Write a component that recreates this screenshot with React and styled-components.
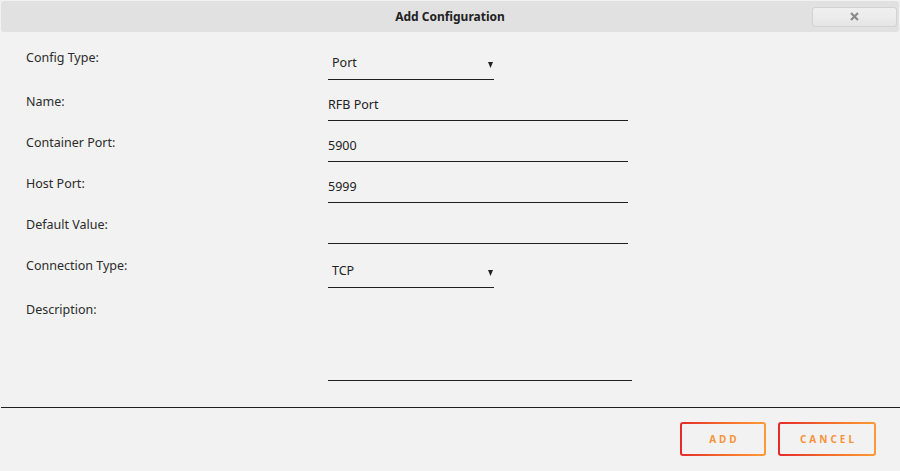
import styled, { createGlobalStyle } from "styled-components"

const GlobalStyle = createGlobalStyle`
  body {
    margin: 0;
    background: #f2f2f2;
    font-family: "Noto Sans", "Open Sans", sans-serif;
    color: #2b2b2b;
  }
`

const fields = [
  { label: "Config Type:", kind: "select", value: "Port" },
  { label: "Name:", kind: "input", value: "RFB Port" },
  { label: "Container Port:", kind: "input", value: "5900" },
  { label: "Host Port:", kind: "input", value: "5999" },
  { label: "Default Value:", kind: "input", value: "" },
  { label: "Connection Type:", kind: "select", value: "TCP" },
  { label: "Description:", kind: "textarea", value: "" },
]

const rowHeights = { select: 44, input: 41, textarea: 93 }

export default function App() {
  return (
    <>
      <GlobalStyle />
      <Dialog>
        <TitleBar>
          <span />
          <Title>Add Configuration</Title>
          <CloseButton aria-label="close">
            <svg width="9" height="9" viewBox="0 0 9 9">
              <path d="M1.8 1.8 L7.2 7.2 M7.2 1.8 L1.8 7.2" stroke="#8a8a8a" strokeWidth="2.2" strokeLinecap="square" />
            </svg>
          </CloseButton>
        </TitleBar>

        <Form>
          {fields.map(f => (
            <Row key={f.label} $h={rowHeights[f.kind]}>
              <Label>{f.label}</Label>
              {f.kind === "select" && (
                <SelectBox>
                  <span>{f.value}</span>
                  <svg width="5" height="6" viewBox="0 0 5 6">
                    <path d="M0 0 H5 L2.5 6 Z" fill="#222" />
                  </svg>
                </SelectBox>
              )}
              {f.kind === "input" && <TextInput type="text" defaultValue={f.value} />}
              {f.kind === "textarea" && <TextArea defaultValue={f.value} />}
            </Row>
          ))}
        </Form>

        <Footer>
          <ActionButton>ADD</ActionButton>
          <ActionButton>CANCEL</ActionButton>
        </Footer>
      </Dialog>
    </>
  )
}

const Dialog = styled.div`
  width: 900px;
  height: 471px;
`

const TitleBar = styled.div`
  margin: 1px 1px 0 1px;
  height: 31px;
  background: #e1e1e1;
  border-radius: 3px;
  display: grid;
  grid-template-columns: 1fr auto 1fr;
  align-items: center;
`

const Title = styled.h1`
  margin: 0;
  font-size: 12px;
  font-weight: 700;
  color: #222;
`

const CloseButton = styled.button`
  justify-self: end;
  margin-right: 2px;
  width: 85px;
  height: 20px;
  padding: 0;
  border: 1px solid #d2d2d2;
  border-radius: 3px;
  background: linear-gradient(#efefef 0%, #ececec 50%, #e5e5e5 100%);
  display: flex;
  align-items: center;
  justify-content: center;
`

const Form = styled.div`
  padding-top: 4px;
`

const Row = styled.div`
  display: flex;
  height: ${p => p.$h}px;
`

const Label = styled.div`
  width: 328px;
  flex-shrink: 0;
  box-sizing: border-box;
  padding-left: 26px;
  margin-top: 14px;
  font-size: 12.5px;
  line-height: 16px;
`

const underline = `
  box-sizing: border-box;
  height: 100%;
  border: none;
  border-bottom: 1px solid #1f1f1f;
  background: transparent;
  font-family: "Noto Sans", "Open Sans", sans-serif;
  font-size: 12.5px;
  line-height: 14px;
  color: #222;
  outline: none;
  margin: 0;
`

const SelectBox = styled.div`
  ${underline}
  width: 166px;
  display: flex;
  align-items: flex-end;
  justify-content: space-between;
  padding: 0 1px 9px 4px;

  svg {
    display: block;
    margin-bottom: 2px;
  }
`

const TextInput = styled.input`
  ${underline}
  width: 300px;
  padding: 17px 0 9px 0;
  display: block;
`

const TextArea = styled.textarea`
  ${underline}
  width: 304px;
  resize: none;
  padding: 0;
  display: block;
`

const Footer = styled.div`
  margin-top: 26px;
  margin-left: 1px;
  border-top: 1px solid #1f1f1f;
  display: flex;
  justify-content: flex-end;
  gap: 12px;
  padding: 14px 24px 0 0;
`

const ActionButton = styled.button`
  min-width: 86px;
  height: 34px;
  padding: 0 17px;
  border: 2px solid transparent;
  border-radius: 3px;
  background:
    linear-gradient(#f2f2f2, #f2f2f2) padding-box,
    linear-gradient(90deg, #e42a2a 0%, #f26a2c 50%, #ff9a35 100%) border-box;
  color: #f7923a;
  font-family: "Noto Sans", "Open Sans", sans-serif;
  font-size: 10px;
  font-weight: 700;
  letter-spacing: 3px;
  text-indent: 3px;
  cursor: pointer;
`
